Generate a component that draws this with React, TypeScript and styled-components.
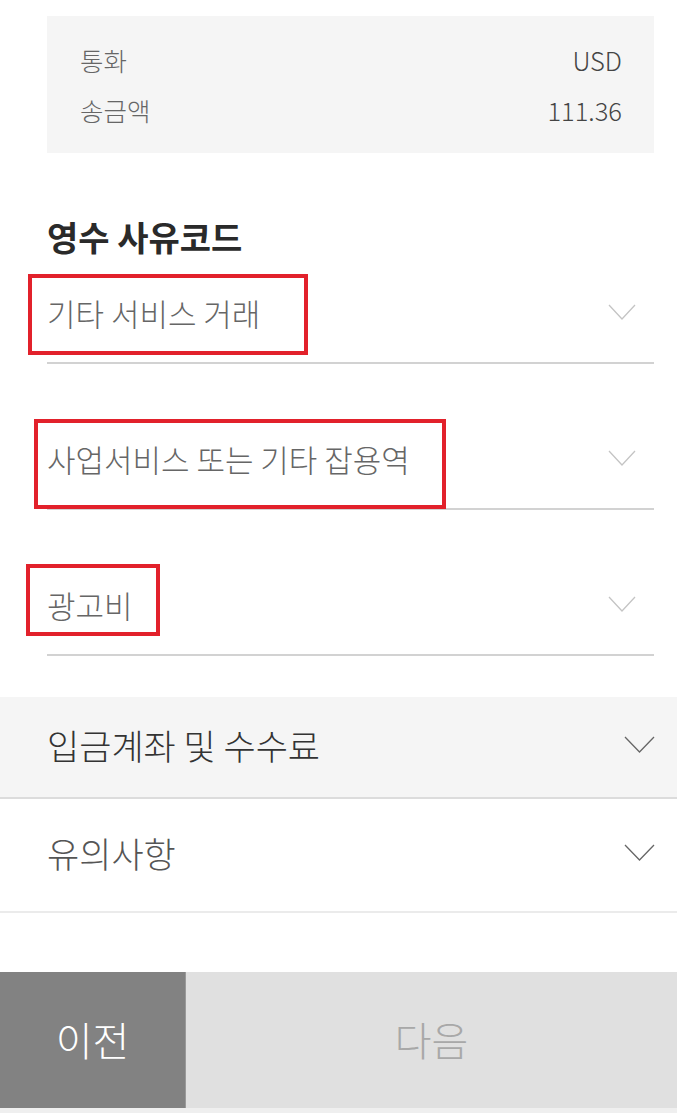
import React from "react";
import styled, { createGlobalStyle } from "styled-components";

const GlobalStyle = createGlobalStyle`
  html, body {
    margin: 0;
    padding: 0;
    background: #fff;
    font-family: "Noto Sans CJK KR", "Noto Sans", sans-serif;
  }
  *, *::before, *::after {
    box-sizing: border-box;
  }
`;

type Mark = { left: number; top: number; width: number; height: number };

const fields: { label: string; mark: Mark }[] = [
  { label: "기타 서비스 거래", mark: { left: -19, top: 6, width: 280, height: 81 } },
  { label: "사업서비스 또는 기타 잡용역", mark: { left: -13, top: 5, width: 412, height: 90 } },
  { label: "광고비", mark: { left: -21, top: 4, width: 134, height: 72 } },
];

const Chevron: React.FC<{ color: string; width: number; height: number }> = ({
  color,
  width,
  height,
}) => (
  <svg width={width} height={height} viewBox={`0 0 ${width} ${height}`} fill="none">
    <path
      d={`M1 1 L${width / 2} ${height - 1} L${width - 1} 1`}
      stroke={color}
      strokeWidth={1.3}
    />
  </svg>
);

export default function App() {
  return (
    <Page>
      <GlobalStyle />
      <InfoBox>
        <InfoRow>
          <span>통화</span>
          <InfoValue>USD</InfoValue>
        </InfoRow>
        <InfoRow>
          <span>송금액</span>
          <InfoValue>111.36</InfoValue>
        </InfoRow>
      </InfoBox>

      <Heading>영수 사유코드</Heading>

      <Fields>
        {fields.map((f) => (
          <Field key={f.label}>
            <FieldText>{f.label}</FieldText>
            <Chevron color="#c4c4c4" width={28} height={16} />
            <RedMark
              style={{
                left: f.mark.left,
                top: f.mark.top,
                width: f.mark.width,
                height: f.mark.height,
              }}
            />
          </Field>
        ))}
      </Fields>

      <Accordion $shaded>
        <AccordionTitle $dark>입금계좌 및 수수료</AccordionTitle>
        <Chevron color="#666" width={31} height={17} />
      </Accordion>
      <Accordion>
        <AccordionTitle>유의사항</AccordionTitle>
        <Chevron color="#666" width={31} height={17} />
      </Accordion>

      <ButtonBar>
        <PrevButton>이전</PrevButton>
        <NextButton>다음</NextButton>
      </ButtonBar>
      <BottomStrip />
    </Page>
  );
}

// Styled components
const Page = styled.div`
  width: 677px;
  height: 1113px;
  overflow: hidden;
  display: flex;
  flex-direction: column;
`;

const InfoBox = styled.div`
  margin: 16px 23px 0 47px;
  padding: 18px 32px 19px 33px;
  background: #f5f5f5;
`;

const InfoRow = styled.div`
  display: flex;
  justify-content: space-between;
  align-items: center;
  height: 50px;
  font-size: 25.5px;
  font-weight: 300;
  color: #666;
`;

const InfoValue = styled.span`
  color: #444;
`;

const Heading = styled.h2`
  margin: 64px 0 0 47px;
  font-size: 34px;
  line-height: 40px;
  font-weight: 700;
  color: #2a2a2a;
`;

const Fields = styled.div`
  display: flex;
  flex-direction: column;
  gap: 50px;
  margin: 11px 23px 0 47px;
`;

const Field = styled.div`
  position: relative;
  height: 96px;
  display: flex;
  align-items: center;
  justify-content: space-between;
  padding: 0 18px 6px 0;
  border-bottom: 2px solid #d2d2d2;
`;

const FieldText = styled.span`
  font-size: 31px;
  font-weight: 300;
  color: #666;
`;

const RedMark = styled.div`
  position: absolute;
  border: 4px solid #e2212b;
`;

const Accordion = styled.div<{ $shaded?: boolean }>`
  display: flex;
  align-items: center;
  justify-content: space-between;
  height: ${(p) => (p.$shaded ? "102px" : "114px")};
  margin-top: ${(p) => (p.$shaded ? "41px" : "0")};
  padding: 0 22px 5px 47px;
  background: ${(p) => (p.$shaded ? "#f5f5f5" : "#fff")};
  border-bottom: 2px solid ${(p) => (p.$shaded ? "#dcdcdc" : "#ebebeb")};
`;

const AccordionTitle = styled.span<{ $dark?: boolean }>`
  font-size: 35px;
  font-weight: 300;
  color: ${(p) => (p.$dark ? "#333" : "#555")};
`;

const ButtonBar = styled.div`
  display: flex;
  margin-top: 59px;
  height: 136px;
`;

const PrevButton = styled.div`
  width: 186px;
  display: flex;
  align-items: center;
  justify-content: center;
  padding-bottom: 3px;
  background: #828282;
  border-right: 1px solid #9a9a9a;
  color: #fff;
  font-size: 40px;
  font-weight: 300;
`;

const NextButton = styled.div`
  flex: 1;
  display: flex;
  align-items: center;
  justify-content: center;
  padding-bottom: 3px;
  background: #e0e0e0;
  color: #a8a8a8;
  font-size: 40px;
  font-weight: 300;
`;

const BottomStrip = styled.div`
  height: 5px;
  background: #efefef;
`;
